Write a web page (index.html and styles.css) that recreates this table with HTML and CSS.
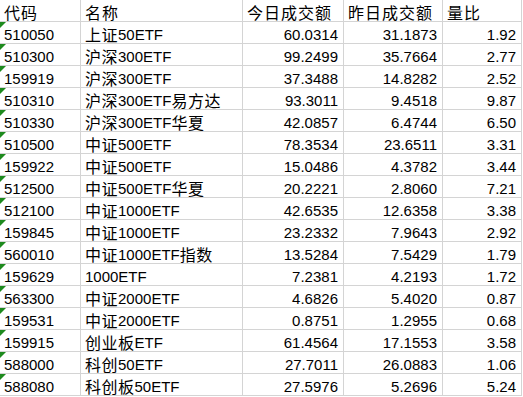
FILE: index.html
```html
<!DOCTYPE html>
<html lang="zh-CN">
<head>
<meta charset="utf-8">
<title>ETF 成交额</title>
<link rel="stylesheet" href="styles.css">
</head>
<body>
<div class="sheet">
  <div class="cell head"><span class="zh">代码</span></div>
  <div class="cell head"><span class="zh">名称</span></div>
  <div class="cell head"><span class="zh">今日成交额</span></div>
  <div class="cell head"><span class="zh">昨日成交额</span></div>
  <div class="cell head"><span class="zh">量比</span></div>

  <div class="cell code">510050</div><div class="cell"><span class="zh">上证</span>50ETF</div><div class="cell num">60.0314</div><div class="cell num">31.1873</div><div class="cell num">1.92</div>
  <div class="cell code">510300</div><div class="cell"><span class="zh">沪深</span>300ETF</div><div class="cell num">99.2499</div><div class="cell num">35.7664</div><div class="cell num">2.77</div>
  <div class="cell code">159919</div><div class="cell"><span class="zh">沪深</span>300ETF</div><div class="cell num">37.3488</div><div class="cell num">14.8282</div><div class="cell num">2.52</div>
  <div class="cell code">510310</div><div class="cell"><span class="zh">沪深</span>300ETF<span class="zh">易方达</span></div><div class="cell num">93.3011</div><div class="cell num">9.4518</div><div class="cell num">9.87</div>
  <div class="cell code">510330</div><div class="cell"><span class="zh">沪深</span>300ETF<span class="zh">华夏</span></div><div class="cell num">42.0857</div><div class="cell num">6.4744</div><div class="cell num">6.50</div>
  <div class="cell code">510500</div><div class="cell"><span class="zh">中证</span>500ETF</div><div class="cell num">78.3534</div><div class="cell num">23.6511</div><div class="cell num">3.31</div>
  <div class="cell code">159922</div><div class="cell"><span class="zh">中证</span>500ETF</div><div class="cell num">15.0486</div><div class="cell num">4.3782</div><div class="cell num">3.44</div>
  <div class="cell code">512500</div><div class="cell"><span class="zh">中证</span>500ETF<span class="zh">华夏</span></div><div class="cell num">20.2221</div><div class="cell num">2.8060</div><div class="cell num">7.21</div>
  <div class="cell code">512100</div><div class="cell"><span class="zh">中证</span>1000ETF</div><div class="cell num">42.6535</div><div class="cell num">12.6358</div><div class="cell num">3.38</div>
  <div class="cell code">159845</div><div class="cell"><span class="zh">中证</span>1000ETF</div><div class="cell num">23.2332</div><div class="cell num">7.9643</div><div class="cell num">2.92</div>
  <div class="cell code">560010</div><div class="cell"><span class="zh">中证</span>1000ETF<span class="zh">指数</span></div><div class="cell num">13.5284</div><div class="cell num">7.5429</div><div class="cell num">1.79</div>
  <div class="cell code">159629</div><div class="cell">1000ETF</div><div class="cell num">7.2381</div><div class="cell num">4.2193</div><div class="cell num">1.72</div>
  <div class="cell code">563300</div><div class="cell"><span class="zh">中证</span>2000ETF</div><div class="cell num">4.6826</div><div class="cell num">5.4020</div><div class="cell num">0.87</div>
  <div class="cell code">159531</div><div class="cell"><span class="zh">中证</span>2000ETF</div><div class="cell num">0.8751</div><div class="cell num">1.2955</div><div class="cell num">0.68</div>
  <div class="cell code">159915</div><div class="cell"><span class="zh">创业板</span>ETF</div><div class="cell num">61.4564</div><div class="cell num">17.1553</div><div class="cell num">3.58</div>
  <div class="cell code">588000</div><div class="cell"><span class="zh">科创</span>50ETF</div><div class="cell num">27.7011</div><div class="cell num">26.0883</div><div class="cell num">1.06</div>
  <div class="cell code">588080</div><div class="cell"><span class="zh">科创板</span>50ETF</div><div class="cell num">27.5976</div><div class="cell num">5.2696</div><div class="cell num">5.24</div>
</div>
</body>
</html>
```

FILE: styles.css
```css
html, body {
  margin: 0;
  padding: 0;
  background: #ffffff;
}

.sheet {
  display: grid;
  grid-template-columns: 81px 162px 101px 99px 79px;
  grid-auto-rows: 22px;
  width: 522px;
  font-family: "Liberation Sans", Arial, "Noto Sans CJK SC", sans-serif;
  font-size: 15px;
  color: #000000;
}

.cell {
  position: relative;
  box-sizing: border-box;
  border-right: 1px solid #d4d4d4;
  border-bottom: 1px solid #d4d4d4;
  display: flex;
  align-items: flex-end;
  padding: 0 4px 0 4px;
  line-height: 17px;
  white-space: nowrap;
}

.zh {
  font-family: "Noto Sans CJK SC", sans-serif;
  font-size: 16px;
  letter-spacing: 0.5px;
}

.head .zh {
  letter-spacing: 1px;
}

.num {
  justify-content: flex-end;
  padding-right: 5px;
}

.code::before {
  content: "";
  position: absolute;
  top: 0;
  left: 0;
  width: 0;
  height: 0;
  border-top: 6px solid #1e8a1e;
  border-right: 6px solid transparent;
}
```
